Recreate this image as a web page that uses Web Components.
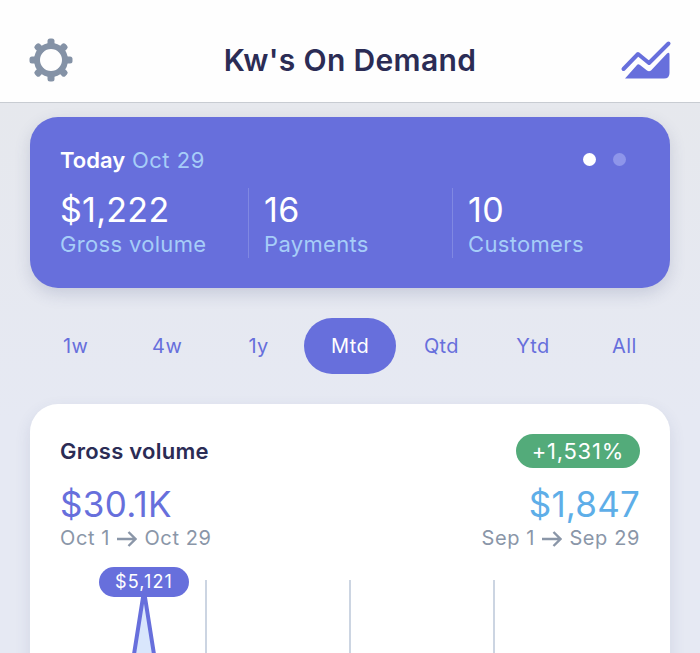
<!DOCTYPE html>
<html>
<head>
<meta charset="utf-8">
<style>
    html, body { margin: 0; height: 653px; overflow: hidden; }
    body { background: linear-gradient(#e6e8ed 100px, #e6e9f3 420px); font-family: Inter, "Noto Sans", sans-serif; }
</style>
</head>
<body>
<app-header>Kw's On Demand</app-header>
<today-card>
    <stat-item value="$1,222" label="Gross volume"></stat-item>
    <stat-item value="16" label="Payments"></stat-item>
    <stat-item value="10" label="Customers"></stat-item>
</today-card>
<range-tabs items="1w,4w,1y,Mtd,Qtd,Ytd,All" active="Mtd"></range-tabs>
<volume-card></volume-card>

<script>
class AppHeader extends HTMLElement {
    constructor() {
        super()
        this.attachShadow({ mode: 'open' }).innerHTML = `
        <style>
            :host {
                display: grid;
                grid-template-columns: 1fr auto 1fr;
                align-items: center;
                box-sizing: border-box;
                height: 103px;
                padding: 18px 28px 0 28px;
                background: #fefefe;
                border-bottom: 1px solid #c8ccd2;
            }
            .title {
                font-size: 30px;
                font-weight: 600;
                color: #2b2c55;
                letter-spacing: 0.35px;
            }
            svg { display: block; }
            .trend { justify-self: end; margin-top: 2px; }
        </style>
        <svg width="46" height="46" viewBox="0 0 46 46">
            <g fill="#8492a6">
                ${[0, 45, 90, 135, 180, 225, 270, 315].map(a =>
                    `<rect x="19.5" y="1.500" width="7" height="10" rx="2.500" transform="rotate(${a} 23 23)"/>`).join('')}
            </g>
            <circle cx="23" cy="23" r="14" fill="none" stroke="#8492a6" stroke-width="6"/>
        </svg>
        <span class="title"><slot></slot></span>
        <svg class="trend" width="52" height="42" viewBox="0 0 52 42">
            <path d="M3.500 29 L18 14 L29 23 L48.500 3.500" fill="none" stroke="#676fdc" stroke-width="4" stroke-linecap="round" stroke-linejoin="round"/>
            <path d="M5 38.500 L17 25 Q18 23.500 20 25 L27 30.500 Q29 32 31 30.500 L47 13.500 Q49.500 11.500 49.500 14.500 L49.500 33 Q49.500 38.500 44 38.500 Z" fill="#676fdc"/>
        </svg>`
    }
}

class TodayCard extends HTMLElement {
    constructor() {
        super()
        this.attachShadow({ mode: 'open' }).innerHTML = `
        <style>
            :host {
                display: block;
                box-sizing: border-box;
                height: 171px;
                margin: 14px 30px 0;
                padding: 29px 30px 0;
                background: #676fdc;
                border-radius: 28px;
                box-shadow: 0 6px 16px rgba(60, 70, 120, 0.18);
            }
            .top {
                display: flex;
                align-items: center;
                justify-content: space-between;
                height: 27px;
                font-size: 22px;
                letter-spacing: 0.55px;
                color: #a6cdf8;
            }
            b { color: #fff; font-weight: 600; letter-spacing: 0; }
            .dots { display: flex; align-items: center; gap: 17px; padding-right: 14px; }
            .dots i { width: 13px; height: 13px; border-radius: 50%; background: #8e95ea; }
            .dots i:first-child { background: #fff; }
            .stats {
                display: grid;
                grid-template-columns: 188px 204px 1fr;
                margin-top: 15px;
            }
        </style>
        <div class="top">
            <span><b>Today</b> Oct 29</span>
            <span class="dots"><i></i><i></i></span>
        </div>
        <div class="stats"><slot></slot></div>`
    }
}

class StatItem extends HTMLElement {
    constructor() {
        super()
        this.attachShadow({ mode: 'open' }).innerHTML = `
        <style>
            :host {
                display: block;
                height: 70px;
                border-left: 1px solid #8088e2;
                padding-left: 15px;
            }
            :host(:first-child) { border-left: none; padding-left: 0; }
            .value { font-size: 34px; line-height: 43px; color: #fff; letter-spacing: 0.3px; }
            .label { font-size: 22px; line-height: 27px; color: #a6cdf8; letter-spacing: 0.33px; }
        </style>
        <div class="value">${this.getAttribute('value')}</div>
        <div class="label">${this.getAttribute('label')}</div>`
    }
}

class RangeTabs extends HTMLElement {
    constructor() {
        super()
        const active = this.getAttribute('active')
        const items = this.getAttribute('items').split(',')
        this.attachShadow({ mode: 'open' }).innerHTML = `
        <style>
            :host {
                display: grid;
                grid-template-columns: repeat(7, 1fr);
                height: 56px;
                margin: 30px 30px 0;
            }
            span {
                display: flex;
                align-items: center;
                justify-content: center;
                border-radius: 28px;
                font-size: 20px;
                letter-spacing: 0.4px;
                color: #676fdc;
            }
            .on { background: #676fdc; color: #fff; }
        </style>
        ${items.map(i => `<span class="${i === active ? 'on' : ''}">${i}</span>`).join('')}`
    }
}

class VolumeCard extends HTMLElement {
    constructor() {
        super()
        const arrow = `<svg width="20" height="16" viewBox="0 0 20 16"><path d="M0 8 H18.500 M11.500 1 L18.500 8 L11.500 15" fill="none" stroke="#8a96a8" stroke-width="2.400"/></svg>`
        this.attachShadow({ mode: 'open' }).innerHTML = `
        <style>
            :host {
                display: block;
                box-sizing: border-box;
                height: 400px;
                margin: 30px 30px 0;
                padding: 30px 30px 0;
                background: #fff;
                border-radius: 28px;
                box-shadow: 0 6px 16px rgba(60, 70, 120, 0.12);
            }
            .row { display: flex; justify-content: space-between; align-items: center; }
            .name { font-size: 22px; font-weight: 600; color: #2b2c55; letter-spacing: 0.25px; }
            .pill {
                display: flex;
                align-items: center;
                height: 34px;
                padding: 0 16px;
                border-radius: 17px;
                background: #53ab7a;
                color: #fff;
                font-size: 22px;
                letter-spacing: 0.75px;
            }
            .amounts { margin-top: 16px; font-size: 35px; line-height: 40px; letter-spacing: 0.2px; }
            .now { color: #676fdc; letter-spacing: 0.3px; }
            .then { color: #5eaee8; }
            .dates { font-size: 20px; line-height: 26px; color: #8a96a8; margin-top: 1px; letter-spacing: 0.6px; }
            .dates svg { vertical-align: -2px; margin: 0 1px; }
            .chart { position: relative; height: 100px; margin: 16px -30px 0; }
            .tip {
                position: absolute;
                left: 69px;
                top: 0;
                width: 90px;
                height: 30px;
                border-radius: 15px;
                background: #676fdc;
                color: #fff;
                font-size: 18px;
                letter-spacing: 1.1px;
                line-height: 30px;
                text-align: center;
            }
            .chart svg { display: block; }
        </style>
        <div class="row">
            <span class="name">Gross volume</span>
            <span class="pill">+1,531%</span>
        </div>
        <div class="row amounts">
            <span class="now">$30.1K</span>
            <span class="then">$1,847</span>
        </div>
        <div class="row dates">
            <span>Oct 1 ${arrow} Oct 29</span>
            <span>Sep 1 ${arrow} Sep 29</span>
        </div>
        <div class="chart">
            <svg width="640" height="100" viewBox="0 0 640 100">
                <path d="M176 13 V100 M320 13 V100 M464 13 V100" stroke="#ccd5e2" stroke-width="2" fill="none"/>
                <path d="M102 100 L114 24 L126 100 Z" fill="#d9e6fc"/>
                <path d="M102 100 L114 24 L126 100" fill="none" stroke="#676fdc" stroke-width="4" stroke-linejoin="round"/>
            </svg>
            <div class="tip">$5,121</div>
        </div>`
    }
}

window.customElements.define('app-header', AppHeader)
window.customElements.define('today-card', TodayCard)
window.customElements.define('stat-item', StatItem)
window.customElements.define('range-tabs', RangeTabs)
window.customElements.define('volume-card', VolumeCard)
</script>
</body>
</html>
